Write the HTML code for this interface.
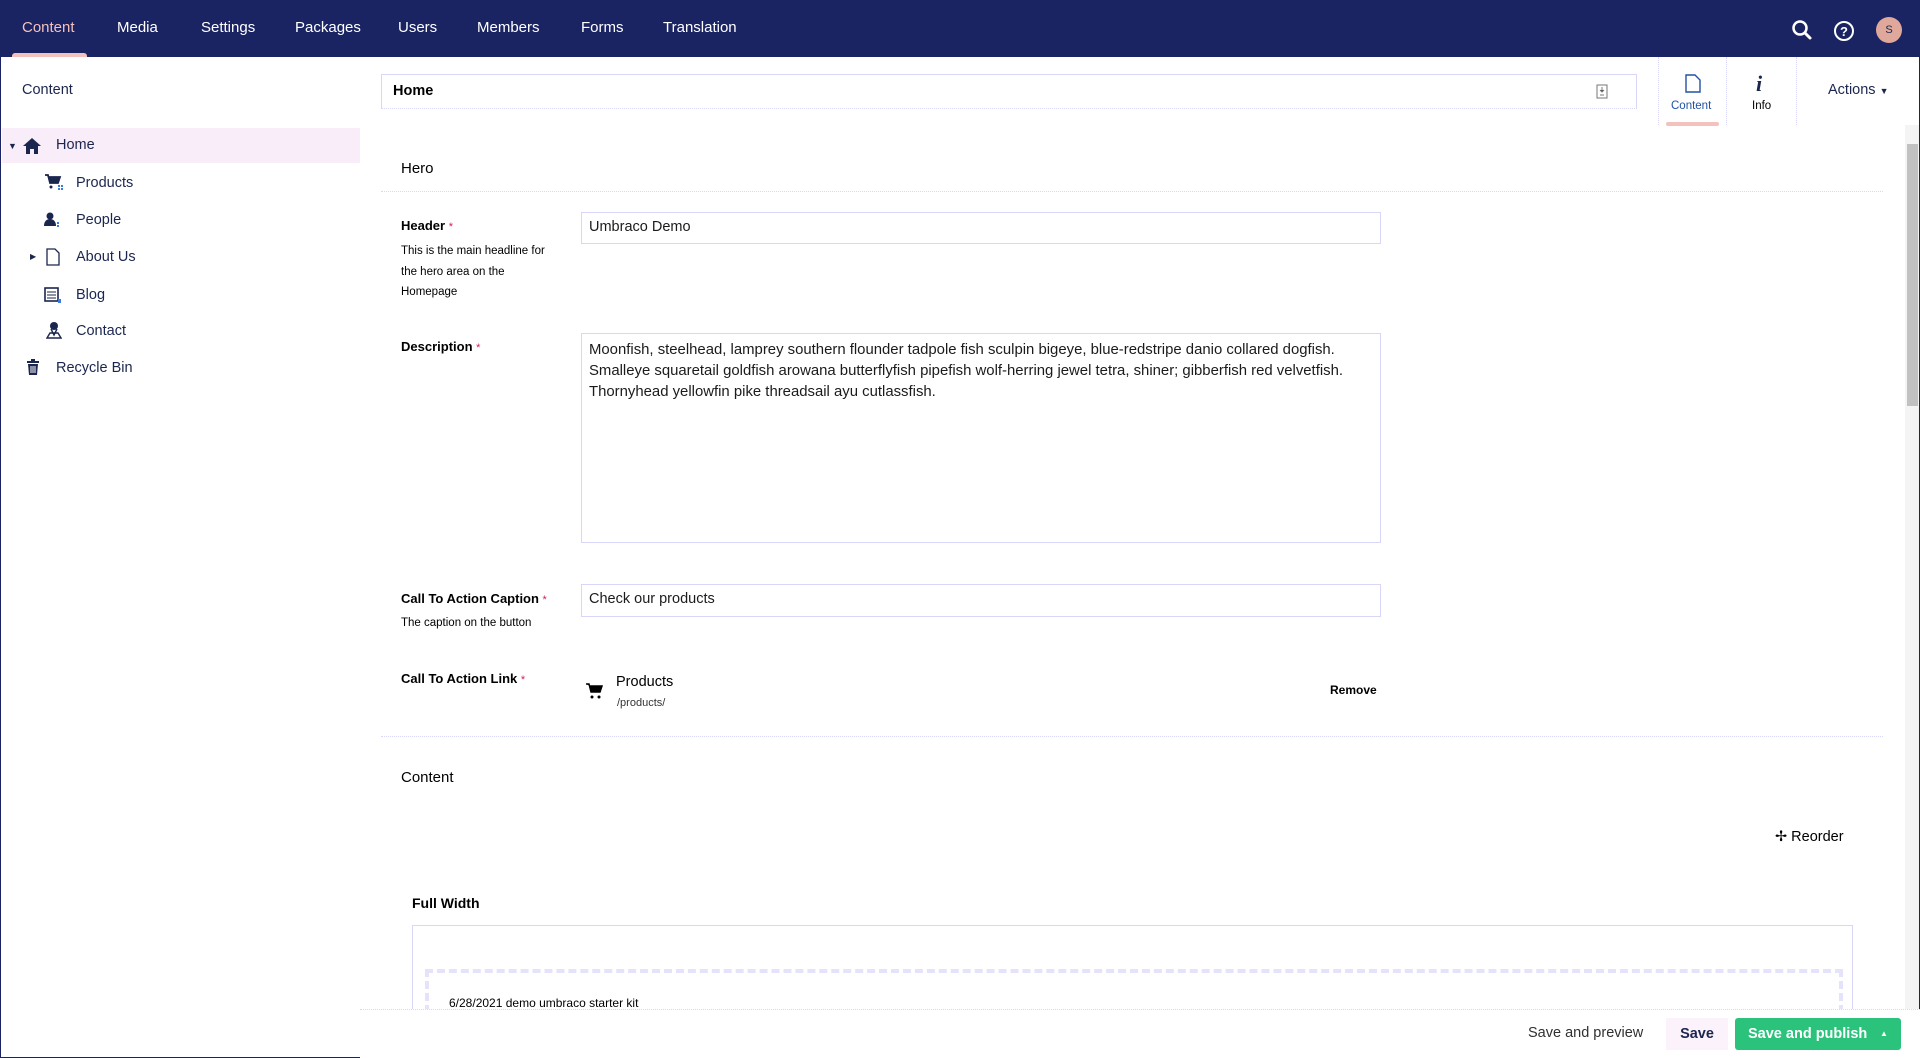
<!DOCTYPE html>
<html><head><meta charset="utf-8"><style>
*{box-sizing:border-box;margin:0;padding:0}
body{width:1920px;height:1058px;overflow:hidden;background:#fff;font-family:"Liberation Sans",sans-serif;color:#1b264f;position:relative;border:1px solid #1b2463}
.a{position:absolute;white-space:nowrap}
#top{left:0;top:0;width:1920px;height:56px;background:#1b2463}
.nav{top:18px;font-size:15px;color:#fff}
.tree{font-size:14.5px;color:#1b264f}
.lbl{font-size:13px;font-weight:bold;color:#000}
.lbl i{color:#d42054;font-style:normal;font-weight:normal;font-size:11px}
.desc{font-size:11.5px;color:#000;line-height:20.5px}
.inp{border:1px solid #d8d7f9;background:#fff;font-size:14.5px;color:#1b1b1b;padding:6px 7px}
.dl{height:0;border-top:1px dotted #d8d7f9}
</style></head><body>
<div id="top" class="a"></div>
<div class="a nav" style="left:21px;color:#f5c1bc">Content</div>
<div class="a" style="left:11px;top:52px;width:75px;height:4px;background:#f5c1bc;border-radius:3px 3px 0 0"></div>
<div class="a nav" style="left:116px">Media</div>
<div class="a nav" style="left:200px">Settings</div>
<div class="a nav" style="left:294px">Packages</div>
<div class="a nav" style="left:397px">Users</div>
<div class="a nav" style="left:476px">Members</div>
<div class="a nav" style="left:580px">Forms</div>
<div class="a nav" style="left:662px">Translation</div>
<svg class="a" style="left:1790px;top:18px" width="22" height="22" viewBox="0 0 22 22"><circle cx="9" cy="9" r="6.5" fill="none" stroke="#fff" stroke-width="2.5"/><path d="M14 14l5 5" stroke="#fff" stroke-width="3" stroke-linecap="round"/></svg>
<svg class="a" style="left:1832px;top:19px" width="22" height="22" viewBox="0 0 22 22"><circle cx="11" cy="11" r="9" fill="none" stroke="#fff" stroke-width="2"/><text x="11" y="16" font-size="13" font-weight="bold" fill="#fff" text-anchor="middle" font-family="Liberation Sans">?</text></svg>
<div class="a" style="left:1875px;top:16px;width:26px;height:26px;border-radius:50%;background:#e0a89b;color:#1b264f;font-size:11px;text-align:center;line-height:26px">S</div>

<div class="a" style="left:21px;top:81px;font-size:14.5px">Content</div>
<div class="a" style="left:1px;top:127px;width:358px;height:35px;background:#f9edfa"></div>
<div class="a" style="left:7px;top:140px;font-size:9px">▼</div>
<svg class="a" style="left:21px;top:136px" width="20" height="18" viewBox="0 0 20 18"><path d="M10 1L1 9h3v8h4v-5h4v5h4V9h3z" fill="#1b264f"/></svg>
<div class="a tree" style="left:55px;top:136px">Home</div>
<svg class="a" style="left:43px;top:172px" width="20" height="18"><path d="M1 2h3l2 8h8l2-6H5" fill="#1b264f" stroke="#1b264f" stroke-width="1.8"/><circle cx="7" cy="14" r="1.5" fill="#1b264f"/><rect x="14" y="12" width="2" height="2" fill="#3b7be0"/><rect x="17" y="12" width="2" height="2" fill="#3b7be0"/><rect x="14" y="15" width="2" height="2" fill="#3b7be0"/><rect x="17" y="15" width="2" height="2" fill="#3b7be0"/></svg>
<div class="a tree" style="left:75px;top:174px">Products</div>
<svg class="a" style="left:43px;top:211px" width="18" height="16"><circle cx="6" cy="4" r="3.5" fill="#1b264f"/><path d="M0 14c0-5 3-7 6-7s6 2 6 7z" fill="#1b264f"/><rect x="13" y="10" width="2" height="2" fill="#3b7be0"/><rect x="13" y="13" width="2" height="2" fill="#3b7be0"/></svg>
<div class="a tree" style="left:75px;top:211px">People</div>
<div class="a" style="left:29px;top:251px;font-size:8px">▶</div>
<svg class="a" style="left:45px;top:247px" width="14" height="18"><path d="M1 1h8l4 4v12H1z" fill="none" stroke="#1b264f" stroke-width="1.3"/></svg>
<div class="a tree" style="left:75px;top:248px">About Us</div>
<svg class="a" style="left:43px;top:285px" width="18" height="18"><rect x="1" y="2" width="13" height="13" fill="none" stroke="#1b264f" stroke-width="1.6"/><path d="M3 6h9M3 9h9M3 12h9" stroke="#1b264f"/><rect x="14" y="13" width="3" height="4" fill="#3b7be0"/></svg>
<div class="a tree" style="left:75px;top:286px">Blog</div>
<svg class="a" style="left:45px;top:320px" width="16" height="18"><circle cx="8" cy="5" r="4" fill="#1b264f"/><path d="M5 8l3 6 3-6M1 17l3-5h8l3 5z" fill="none" stroke="#1b264f" stroke-width="1.4"/></svg>
<div class="a tree" style="left:75px;top:322px">Contact</div>
<svg class="a" style="left:25px;top:357px" width="14" height="18"><rect x="1" y="3" width="12" height="2" fill="#1b264f"/><rect x="5" y="1" width="4" height="2" fill="#1b264f"/><path d="M2 6h10l-1 11H3z" fill="#1b264f"/><path d="M5 8v7M7 8v7M9 8v7" stroke="#fff"/></svg>
<div class="a tree" style="left:55px;top:359px">Recycle Bin</div>

<div class="a" style="left:380px;top:73px;width:1256px;height:35px;border:1px solid #d8d7f9;border-bottom-style:dotted"></div>
<div class="a" style="left:392px;top:82px;font-size:14.5px;font-weight:bold;color:#000">Home</div>
<svg class="a" style="left:1595px;top:83px" width="12" height="15"><rect x="1" y="1" width="10" height="13" fill="none" stroke="#777"/><path d="M6 3v5M4 6l2 2 2-2M4 11h4" stroke="#777"/></svg>
<div class="a" style="left:1657px;top:56px;height:68px;border-left:1px dotted #d8d7f9"></div>
<div class="a" style="left:1725px;top:56px;height:68px;border-left:1px dotted #d8d7f9"></div>
<div class="a" style="left:1795px;top:56px;height:68px;border-left:1px dotted #d8d7f9"></div>
<svg class="a" style="left:1684px;top:73px" width="16" height="19"><path d="M1 1h9l5 5v12H1z" fill="none" stroke="#2152a3" stroke-width="1.4"/></svg>
<div class="a" style="left:1670px;top:99px;font-size:11.5px;color:#2152a3">Content</div>
<div class="a" style="left:1665px;top:121px;width:53px;height:4px;background:#f5c1bc;border-radius:2px"></div>
<div class="a" style="left:1755px;top:70px;font-size:22px;font-style:italic;font-weight:bold;font-family:'Liberation Serif',serif;color:#1b264f">i</div>
<div class="a" style="left:1751px;top:99px;font-size:11.5px;color:#000">Info</div>
<div class="a" style="left:1827px;top:81px;font-size:14.5px">Actions <span style="font-size:9px">▼</span></div>

<div class="a" style="left:1904px;top:124px;width:14px;height:884px;background:#f4f4f4"></div>
<div class="a" style="left:1906px;top:143px;width:11px;height:262px;background:#c1c1c1"></div>

<div class="a" style="left:400px;top:159px;font-size:15px;color:#000">Hero</div>
<div class="a dl" style="left:380px;top:190px;width:1502px"></div>

<div class="a lbl" style="left:400px;top:217px">Header <i>*</i></div>
<div class="a desc" style="left:400px;top:240px">This is the main headline for<br>the hero area on the<br>Homepage</div>
<div class="a inp" style="left:580px;top:211px;width:800px;height:32px">Umbraco Demo</div>

<div class="a lbl" style="left:400px;top:338px">Description <i>*</i></div>
<div class="a inp" style="left:580px;top:332px;width:800px;height:210px;line-height:21px;font-size:14.9px">Moonfish, steelhead, lamprey southern flounder tadpole fish sculpin bigeye, blue-redstripe danio collared dogfish.<br>Smalleye squaretail goldfish arowana butterflyfish pipefish wolf-herring jewel tetra, shiner; gibberfish red velvetfish.<br>Thornyhead yellowfin pike threadsail ayu cutlassfish.</div>

<div class="a lbl" style="left:400px;top:590px">Call To Action Caption <i>*</i></div>
<div class="a desc" style="left:400px;top:612px">The caption on the button</div>
<div class="a inp" style="left:580px;top:583px;width:800px;height:33px">Check our products</div>

<div class="a lbl" style="left:400px;top:670px">Call To Action Link <i>*</i></div>
<svg class="a" style="left:584px;top:681px" width="18" height="18"><path d="M1 2h3l2 8h9l2-6H5" fill="#000" stroke="#000" stroke-width="1.5"/><circle cx="7" cy="15" r="1.5"/><circle cx="14" cy="15" r="1.5"/></svg>
<div class="a" style="left:615px;top:673px;font-size:14.5px;color:#000">Products</div>
<div class="a" style="left:616px;top:696px;font-size:11px;color:#333">/products/</div>
<div class="a" style="left:1329px;top:682px;font-size:12px;font-weight:bold;color:#000">Remove</div>
<div class="a dl" style="left:380px;top:735px;width:1502px"></div>

<div class="a" style="left:400px;top:768px;font-size:15px;color:#000">Content</div>
<div class="a" style="left:1774px;top:828px;font-size:14.5px;color:#000">✢ Reorder</div>
<div class="a" style="left:411px;top:894px;font-size:14px;font-weight:bold;color:#000">Full Width</div>
<div class="a" style="left:411px;top:924px;width:1441px;height:100px;border:1px solid #d8d7f9"></div>
<div class="a" style="left:424px;top:968px;width:1418px;height:80px;border:4px dashed #e4e3fb"></div>
<div class="a" style="left:448px;top:995px;font-size:12px;color:#000">6/28/2021 demo umbraco starter kit</div>

<div class="a" style="left:359px;top:1008px;width:1560px;height:49px;background:#fff;border-top:1px dotted #d8d7f9"></div>
<div class="a" style="left:1527px;top:1024px;font-size:14.5px;color:#303033">Save and preview</div>
<div class="a" style="left:1665px;top:1017px;width:62px;height:32px;background:#fbf2fb;font-size:14.5px;font-weight:bold;text-align:center;line-height:32px">Save</div>
<div class="a" style="left:1734px;top:1017px;width:166px;height:32px;background:#2bc37c;border-radius:3px;color:#fff;font-size:14.5px;font-weight:bold;line-height:32px;padding-left:13px">Save and publish</div>
<div class="a" style="left:1879px;top:1017px;font-size:8px;line-height:32px;color:#fff">▲</div>
</body></html>
